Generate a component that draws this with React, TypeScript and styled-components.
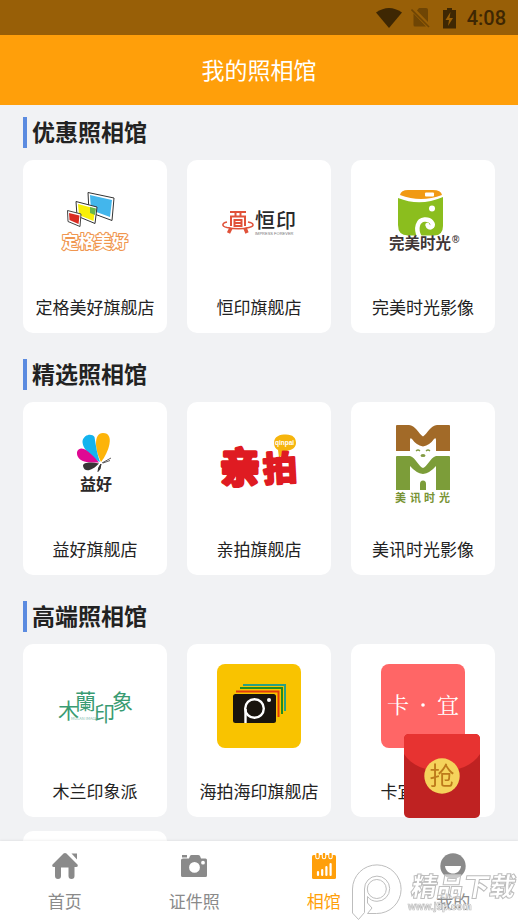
import React from "react";
import styled, { createGlobalStyle } from "styled-components";

const SANS = '"Noto Sans CJK SC", "Noto Sans", sans-serif';

const GlobalStyle = createGlobalStyle`
  *, *::before, *::after { box-sizing: border-box; }
  body { margin: 0; background: #f1f2f4; font-family: ${SANS}; color: #222; }
  a { color: inherit; text-decoration: none; }
  h1, h2 { margin: 0; }
`;

const Screen = styled.div`
  display: flex;
  flex-direction: column;
  height: 100vh;
`;

const StatusBar = styled.div`
  display: flex;
  flex: none;
  align-items: center;
  justify-content: flex-end;
  gap: 9px;
  height: 35px;
  padding: 0 12px;
  background: #985f07;
  color: #3e2703;
`;

const Clock = styled.time`
  font: 500 20px/24px Roboto, sans-serif;
`;

const Header = styled.header`
  flex: none;
  padding: 17px 0 19px;
  background: #ff9f0a;
  color: #fff;
  text-align: center;
`;

const PageTitle = styled.h1`
  font-size: 23px;
  font-weight: 400;
  line-height: 34px;
`;

const Content = styled.main`
  display: flex;
  flex: 1;
  flex-direction: column;
  gap: 26px;
  min-height: 0;
  padding: 12px 23px 0;
  overflow: hidden;
`;

const Section = styled.section`
  display: flex;
  flex: none;
  flex-direction: column;
  gap: 12px;
`;

const SectionTitle = styled.h2`
  padding: 0 0 2px 5px;
  border-left: 4px solid #5b8be0;
  font-size: 23px;
  font-weight: 700;
  line-height: 29px;
`;

const CardGrid = styled.div`
  display: grid;
  grid-template-columns: repeat(3, 1fr);
  gap: 14px 20px;
`;

const Card = styled.a`
  display: flex;
  flex-direction: column;
  align-items: center;
  gap: 31px;
  min-height: 173px;
  padding: 20px 0 14px;
  border-radius: 10px;
  background: #fff;
`;

const CardLabel = styled.span`
  font-size: 17px;
  line-height: 24px;
  white-space: nowrap;
`;

const LogoSvg = styled.svg`
  display: block;
  width: 84px;
  height: 84px;
  border-radius: 8px;
  font-family: ${SANS};
`;

const TabBar = styled.nav`
  display: grid;
  flex: none;
  grid-template-columns: repeat(4, 1fr);
  padding: 12px 0 9px;
  background: #fff;
  box-shadow: 0 -1px 2px rgba(0, 0, 0, 0.06);
`;

const Tab = styled.a<{ $active?: boolean }>`
  display: flex;
  flex-direction: column;
  align-items: center;
  gap: 10px;
  color: ${(p) => (p.$active ? "#ff9f0a" : "#8a8a8a")};
  font-size: 17px;
  line-height: 24px;
`;

const Envelope = styled.button`
  position: fixed;
  right: 38px;
  bottom: 104px;
  padding: 0;
  border: 0;
  background: none;
  cursor: pointer;

  svg { display: block; font-family: ${SANS}; }
`;

const Watermark = styled.div`
  position: fixed;
  right: 0;
  bottom: 0;
  pointer-events: none;

  svg { display: block; font-family: ${SANS}; }
`;

const Logo = ({ children }: { children: React.ReactNode }) => (
  <LogoSvg viewBox="0 0 84 84" aria-hidden="true">{children}</LogoSvg>
);

const DinggeLogo = () => (
  <Logo>
    <path d="M35 12.500 61 18 59 40.500 36 32Z" fill="#fff" stroke="#333" />
    <path d="M37 15 59 20 57 37 38 30Z" fill="#43b6ec" />
    <path d="M23 21.500 44 27 42 43.500 24 36Z" fill="#fff" stroke="#333" />
    <path d="M25 24 42 28.500 40.500 41 26 35Z" fill="#f8ef08" />
    <path d="M37 27 43 28.500 42 35 37 33Z" fill="#68b64a" />
    <path d="M14.500 30.500 28 34 27 46.500 15 41.500Z" fill="#fff" stroke="#444" />
    <path d="M16 33 26.500 35.500 25.500 44 16.500 40Z" fill="#d92b22" />
    <text x="9" y="68" fontSize="16.500" fontWeight="700" fill="#fff" stroke="#f0964f" strokeWidth="2.200" strokeLinejoin="round" paintOrder="stroke">定格美好</text>
  </Logo>
);

const HengyinLogo = () => (
  <Logo>
    <g fill="none" stroke="#e0523a" strokeWidth="2">
      <path d="M13 32H29M18.500 32V36M23.500 32V36M14 46V36.500H28V46M17.500 40H24.500V46H17.500ZM17.500 43H24.500" />
      <path d="M10 42C5 43 4 46 10 47.500 17 49 26 49 32 47.500 38 46 37 43 31 42" strokeWidth="1.500" />
      <path d="M14 48 11.500 53M28 48 30 53" strokeWidth="3.500" />
    </g>
    <text x="38" y="48" fontSize="20" fontWeight="500" fill="#29292b">恒</text>
    <text x="59" y="48" fontSize="20" fontWeight="500" fill="#29292b">印</text>
    <text x="38" y="55" fontSize="4" fontFamily="Liberation Sans, sans-serif" fill="#777">IMPRESS FOREVER</text>
  </Logo>
);

const WanmeiLogo = () => (
  <Logo>
    <path d="M17 18Q39 27 62 17V46Q62 55.500 53 55.500H27Q17 55.500 17 45Z" fill="#8bbe1e" />
    <path d="M19 15Q20 10 27 10H52Q60 10 61 15 40 23 19 15Z" fill="#f19a13" />
    <rect x="44" y="12.500" width="9" height="4" rx="1" fill="#fff" />
    <circle cx="51" cy="28.500" r="3" fill="#fff" />
    <path d="M38.500 57C34 48 37 40 43.500 39.500 50 39 53 44 51 46.500 49 48.500 47 47 46.500 45" fill="none" stroke="#fff" strokeWidth="4.500" strokeLinecap="round" />
    <text x="8" y="69" fontSize="15.500" fontWeight="700" fill="#403636">完美时光</text>
    <text x="71" y="63" fontSize="10" fontFamily="Liberation Sans, sans-serif" fontWeight="700" fill="#403636">®</text>
  </Logo>
);

const YihaoLogo = () => (
  <Logo>
    <path d="M48 40C42 29 40 11 50 11 62 11 56 30 48 40Z" fill="#fdb409" />
    <path d="M47 40C40 37 29 27 29.500 19 31 12 39 11 41.500 15 43 24 44 32 47 40Z" fill="#14b3ee" />
    <path d="M46 40.500C36 41 28 40 25 35 22 29 26 25 31 27 37 30 42 36 46 40.500Z" fill="#df0993" />
    <path d="M46 41.500C38 40 30 40 30 44 31 50 38 50 46 41.500Z" fill="#383536" />
    <path d="M49 41 58 36M50 41 57 38.500" fill="none" stroke="#383536" strokeWidth="0.800" />
    <path d="M45 49.500Q45 45 48 42L47 47Z" fill="#383536" stroke="#383536" />
    <text x="27" y="68" fontSize="16" fontWeight="700" fill="#2b2829">益好</text>
  </Logo>
);

const QinpaiLogo = () => (
  <Logo>
    <path d="M57 21C57 14 63 12.500 69 12.500 76 12.500 79 16 79 21 79 27 72 29 68 29L62 36 61 28Q57 26 57 21Z" fill="#f6b50d" />
    <g fill="#df1b22" stroke="#df1b22" strokeLinejoin="round" strokeLinecap="round" fontWeight="700">
      <text x="3" y="60" fontSize="40" strokeWidth="3.500">亲</text>
      <text x="46" y="59" fontSize="34" strokeWidth="2.600" transform="rotate(-3 62 47)">拍</text>
    </g>
    <text x="58" y="23" fontSize="6.500" fontWeight="700" fontFamily="Liberation Sans, sans-serif" fill="#fff">qinpai</text>
  </Logo>
);

const MeixunLogo = () => (
  <Logo>
    <path d="M16 3H28C34 3 38 12 42 14.500 46 12 50 3 56 3H68Q69 3 69 4V29H55V18Q55 15 53 17 49 23 42 24.500 35 23 31 17 29 15 29 18V29H15V4Q15 3 16 3Z" fill="#a26a28" />
    <path d="M35 29Q37 27 39 29M45 29Q47 27 49 29" fill="none" stroke="#829a42" strokeWidth="1.200" />
    <ellipse cx="42" cy="33.500" rx="2.500" ry="1.500" fill="#829a42" />
    <path d="M16 34H29C35 36 38 45 42 46 46 45 49 36 55 34H68Q69 34 69 35V68H55V44Q49 51 42 52 35 51 29 44V68H15V35Q15 34 16 34Z" fill="#7c9d39" />
    <path d="M39 68V62Q39 58.500 42 58.500 45 58.500 45 62V68Z" fill="#7c9d39" />
    <text x="14 29 43 58" y="80" fontSize="11" fontWeight="700" fill="#789334">美讯时光</text>
  </Logo>
);

const MulanLogo = () => (
  <Logo>
    <g fill="#399b72" fontSize="21">
      <text x="5" y="54">木</text>
      <text x="22" y="45">蘭</text>
      <text x="41" y="57">印</text>
      <text x="59" y="45">象</text>
    </g>
    <text x="18" y="56" fontSize="4" fill="#86bcae">MULAN IMAGE</text>
  </Logo>
);

const HaipaiLogo = () => (
  <Logo>
    <rect width="84" height="84" fill="#f9c300" />
    <g fill="none" strokeWidth="2">
      <path d="M26 21H68V47" stroke="#2b9f82" />
      <path d="M23 24H65V50" stroke="#268d1d" />
      <path d="M19 27.500H61.500V53" stroke="#e23b0c" />
    </g>
    <rect x="16" y="30" width="43" height="29" rx="2.500" fill="#19140e" />
    <circle cx="37.500" cy="44.500" r="9.300" fill="none" stroke="#fff" strokeWidth="2.400" />
    <path d="M28.500 45V59" stroke="#fff" strokeWidth="2.400" />
    <circle cx="52" cy="36" r="2" fill="#fff" />
  </Logo>
);

const KayiLogo = () => (
  <Logo>
    <rect width="84" height="84" fill="#ff6666" />
    <g fill="#fff" fontSize="22" fontFamily='"Noto Serif CJK SC", "Noto Sans CJK SC", serif'>
      <text x="6" y="49">卡</text>
      <text x="56" y="49">宜</text>
    </g>
    <circle cx="42" cy="41" r="1.800" fill="#fff" />
  </Logo>
);

const HomeIcon = () => (
  <svg width="26" height="26" viewBox="0 0 26 26" fill="currentColor" aria-hidden="true">
    <path d="M11.500.500Q13-.500 14.500.500L25.500 11.500Q26.500 14 24 14H22.500V23Q22.500 26 19.500 26 16.500 26 16.500 23V14.500H9V23Q9 26 6 26 3 26 3 23V14H2Q-.500 14 .500 11.500Z" />
    <path d="M19.500.500H25V6.500Z" />
  </svg>
);

const CameraIcon = () => (
  <svg width="26" height="26" viewBox="0 0 26 26" fill="currentColor" aria-hidden="true">
    <path d="M1 2H6V4.500H1Z" />
    <path fillRule="evenodd" d="M2 5.500H8L9 3Q9.500 2 10.500 2H17Q18.500 2 19 3L20 5.500H24.500Q26 5.500 26 7V22.500Q26 24 24.500 24H1.500Q0 24 0 22.500V7Q0 5.500 2 5.500ZM13.500 9A5.400 5.400 0 1 0 13.500 19.800 5.400 5.400 0 1 0 13.500 9ZM22 7.800A1.900 1.900 0 1 0 22 11.600 1.900 1.900 0 1 0 22 7.800Z" />
  </svg>
);

const StudioIcon = () => (
  <svg width="26" height="26" viewBox="0 0 26 26" aria-hidden="true">
    <rect x="1" y="2" width="24" height="24" rx="1.500" fill="currentColor" />
    <path d="M6.500 1V4M13 1V4M19.500 1V4" stroke="#fff" strokeWidth="4.500" strokeLinecap="round" />
    <path d="M6.500 1V4M13 1V4M19.500 1V4" stroke="currentColor" strokeWidth="2.400" strokeLinecap="round" />
    <path d="M7 19V22M11.200 17V22M15.400 14V22M19.600 11V22" stroke="#fff" strokeWidth="2.200" strokeLinecap="round" />
  </svg>
);

const MineIcon = () => (
  <svg width="26" height="26" viewBox="0 0 26 26" aria-hidden="true">
    <circle cx="13" cy="13" r="12.700" fill="currentColor" />
    <path d="M5 13H21C20 23 6 23 5 13Z" fill="#fff" />
  </svg>
);

const sections = [
  { title: "优惠照相馆", shops: [
    { name: "定格美好旗舰店", Art: DinggeLogo },
    { name: "恒印旗舰店", Art: HengyinLogo },
    { name: "完美时光影像", Art: WanmeiLogo },
  ] },
  { title: "精选照相馆", shops: [
    { name: "益好旗舰店", Art: YihaoLogo },
    { name: "亲拍旗舰店", Art: QinpaiLogo },
    { name: "美讯时光影像", Art: MeixunLogo },
  ] },
  { title: "高端照相馆", more: true, shops: [
    { name: "木兰印象派", Art: MulanLogo },
    { name: "海拍海印旗舰店", Art: HaipaiLogo },
    { name: "卡宜旗舰店", Art: KayiLogo },
  ] },
];

const tabs = [
  { name: "首页", Icon: HomeIcon },
  { name: "证件照", Icon: CameraIcon },
  { name: "相馆", Icon: StudioIcon, active: true },
  { name: "我的", Icon: MineIcon },
];

export default function App() {
  return (
    <Screen>
      <GlobalStyle />
      <StatusBar>
        <svg width="26" height="20" viewBox="0 0 26 20" fill="currentColor" aria-hidden="true">
          <path d="M0 4.500Q13-4.500 26 4.500L13 20Z" />
        </svg>
        <svg width="20" height="20" viewBox="0 0 20 20" aria-hidden="true">
          <path d="M6 2.500 17 14V2Q17 0 15 0H8ZM2.500 5.500V17Q2.500 18.500 4 18.500H15Z" fill="#6f4504" />
          <path d="M.500 1.500 18 19" stroke="#6f4504" strokeWidth="1.600" />
        </svg>
        <svg width="18" height="22" viewBox="0 0 18 22" aria-hidden="true">
          <path d="M3 3H7V1H12V3H16V21.500H3Z" fill="currentColor" />
          <path d="M10.500 5 5.500 13H9L8 19 13 11H9.500Z" fill="#985f07" />
        </svg>
        <Clock>4:08</Clock>
      </StatusBar>
      <Header><PageTitle>我的照相馆</PageTitle></Header>
      <Content>
        {sections.map(({ title, shops, more }) => (
          <Section key={title}>
            <SectionTitle>{title}</SectionTitle>
            <CardGrid>
              {shops.map(({ name, Art }) => (
                <Card key={name} href="#">
                  <Art />
                  <CardLabel>{name}</CardLabel>
                </Card>
              ))}
              {more && <Card as="div" />}
            </CardGrid>
          </Section>
        ))}
      </Content>
      <TabBar>
        {tabs.map(({ name, Icon, active }) => (
          <Tab key={name} href="#" $active={active} aria-current={active ? "page" : undefined}>
            <Icon />
            {name}
          </Tab>
        ))}
      </TabBar>
      <Envelope type="button">
        <svg width="76" height="84" viewBox="0 0 76 84">
          <rect width="76" height="84" rx="5" fill="#bf2222" />
          <path d="M0 20V5Q0 0 5 0H71Q76 0 76 5V20C62 43 14 43 0 20Z" fill="#e73331" />
          <circle cx="38" cy="42" r="17.700" fill="#f5d35b" />
          <text x="38" y="51" textAnchor="middle" fontSize="25" fill="#bd7a1b">抢</text>
        </svg>
      </Envelope>
      <Watermark>
        <svg width="168" height="60" viewBox="0 0 168 60">
          <g stroke="#bdbdbd" strokeWidth="1">
            <path d="M2.500 27A24.300 24.300 0 1 1 26.500 51.500H17.500L22 46 17.500 41V34.500Q21 39.300 27 39.300A12.600 12.600 0 1 0 14.500 27V50.500L8.500 57.500 2.500 51Z" fill="none" />
            <circle cx="26.800" cy="27" r="9.500" fill="none" />
            <text x="60" y="34" fontSize="26" fontWeight="900" fill="rgba(255,255,255,.55)" strokeWidth="1" transform="translate(6 0) skewX(-10)">精品下载</text>
            <text x="58" y="48" fontSize="10" fontWeight="700" fontFamily="Liberation Sans, sans-serif" fill="#fff" strokeWidth="0.700">www.j9p.com</text>
          </g>
        </svg>
      </Watermark>
    </Screen>
  );
}
